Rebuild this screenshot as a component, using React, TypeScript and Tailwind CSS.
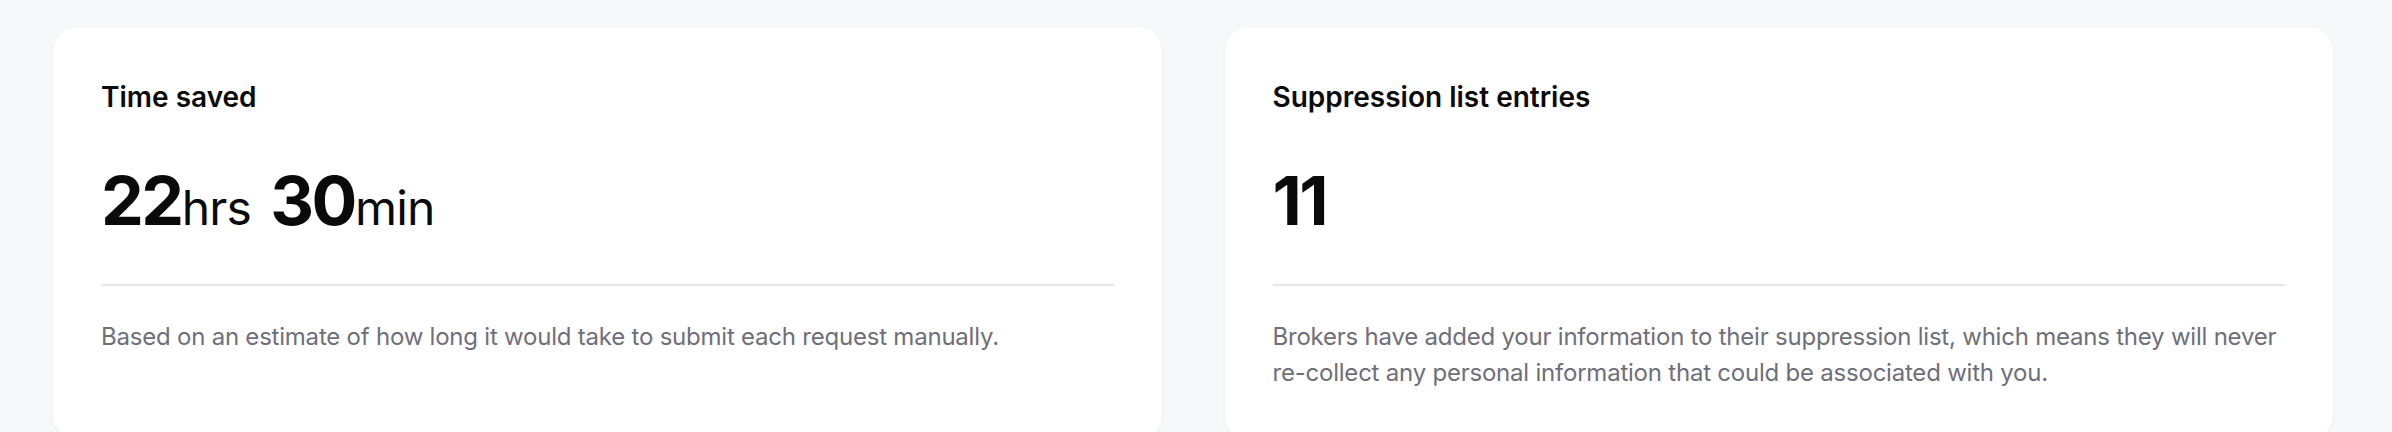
import React from 'react';

type Stat = {
    title: string;
    value: React.ReactNode;
    description: string;
};

const stats: Stat[] = [
    {
        title: 'Time saved',
        value: (
            <>
                <span className="font-bold tracking-[-2.5px]">22</span>
                <span className="text-[48px] leading-none font-normal tracking-[-0.8px]">hrs</span>{' '}
                <span className="font-bold tracking-[-2.5px]">30</span>
                <span className="text-[48px] leading-none font-normal tracking-[-0.8px]">min</span>
            </>
        ),
        description: 'Based on an estimate of how long it would take to submit each request manually.'
    },
    {
        title: 'Suppression list entries',
        value: <span className="font-bold tracking-[-2.5px]">11</span>,
        description:
            'Brokers have added your information to their suppression list, which means they will never re-collect any personal information that could be associated with you.'
    }
];

function StatCard({ stat }: { stat: Stat }) {
    return (
        <div className="bg-white rounded-[24px] p-[48px] shadow-[0_1px_4px_rgba(0,0,0,0.04)]">
            <h3 className="mt-[4px] text-[28px] leading-[36px] font-semibold text-[#0b0b0c]">{stat.title}</h3>
            <div className="mt-[51px] text-[68px] leading-[68px] text-[#0a0a0b]">{stat.value}</div>
            <div className="mt-[50px] border-t-2 border-[#e6e6e8]" />
            <p className="mt-[33px] text-[24px] leading-[36px] tracking-[-0.22px] text-[#6f6f79]">{stat.description}</p>
        </div>
    );
}

export default function App() {
    return (
        <div
            className="min-h-[432px] bg-[#f7f8f9] pt-[27px] pl-[53px] pr-[59px]"
            style={{ fontFamily: 'Inter, "Noto Sans", sans-serif' }}
        >
            <div className="grid grid-cols-2 gap-[63px]">
                {stats.map(stat => (
                    <StatCard key={stat.title} stat={stat} />
                ))}
            </div>
        </div>
    );
}
